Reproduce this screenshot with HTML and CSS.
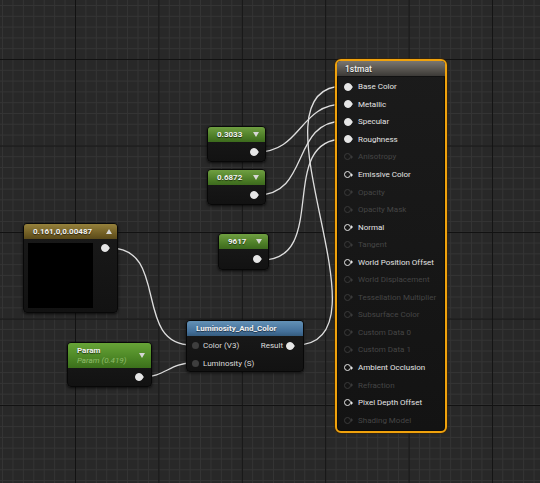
FILE: index.html
```html
<!DOCTYPE html>
<html>
<head>
<meta charset="utf-8">
<link rel="stylesheet" href="styles.css">
</head>
<body>
<div class="graph">
  <svg class="wires" width="540" height="483" viewBox="0 0 540 483">
    <path d="M296,345 C398,345 242,86 344,86"/>
    <path d="M257,152 C302,152 299,104 344,104"/>
    <path d="M257,195 C311,195 290,121 344,121"/>
    <path d="M262,260 C330,260 276,139 344,139"/>
    <path d="M110,248 C170,248 132,345 192,345"/>
    <path d="M143,377 C164,377 171,363 192,363"/>
  </svg>

  <!-- Vector parameter -->
  <div class="node n-vec">
    <div class="head head-gold"><span class="title">0.161,0,0.00487</span><span class="tri up"></span></div>
    <div class="vec-body">
      <div class="preview"></div>
      <span class="pin linked"></span>
    </div>
  </div>

  <!-- Constants -->
  <div class="node const n-c1">
    <div class="head head-green"><span class="title">0.3033</span><span class="tri"></span></div>
    <div class="out-body"><span class="pin linked"></span></div>
  </div>
  <div class="node const n-c2">
    <div class="head head-green"><span class="title">0.6872</span><span class="tri"></span></div>
    <div class="out-body"><span class="pin linked"></span></div>
  </div>
  <div class="node const n-c3">
    <div class="head head-green"><span class="title">9617</span><span class="tri"></span></div>
    <div class="out-body"><span class="pin linked"></span></div>
  </div>

  <!-- Scalar parameter -->
  <div class="node n-param">
    <div class="head head-param">
      <div class="titles">
        <span class="title">Param</span>
        <span class="subtitle">Param (0.419)</span>
      </div>
      <span class="tri"></span>
    </div>
    <div class="out-body"><span class="pin linked"></span></div>
  </div>

  <!-- Function call -->
  <div class="node n-func">
    <div class="head head-blue"><span class="title">Luminosity_And_Color</span></div>
    <div class="func-body">
      <div class="func-row">
        <span class="in"><span class="dot"></span>Color (V3)</span>
        <span class="out">Result<span class="pin linked"></span></span>
      </div>
      <div class="func-row">
        <span class="in"><span class="dot"></span>Luminosity (S)</span>
      </div>
    </div>
  </div>

  <!-- Material result node -->
  <div class="node n-mat">
    <div class="head head-mat"><span class="title mat-title">1stmat</span></div>
    <div class="mat-body">
      <div class="row on"><span class="pin linked"></span>Base Color</div>
      <div class="row on"><span class="pin linked"></span>Metallic</div>
      <div class="row on"><span class="pin linked"></span>Specular</div>
      <div class="row on"><span class="pin linked"></span>Roughness</div>
      <div class="row off"><span class="pin"></span>Anisotropy</div>
      <div class="row on"><span class="pin"></span>Emissive Color</div>
      <div class="row off"><span class="pin"></span>Opacity</div>
      <div class="row off"><span class="pin"></span>Opacity Mask</div>
      <div class="row on"><span class="pin"></span>Normal</div>
      <div class="row off"><span class="pin"></span>Tangent</div>
      <div class="row on"><span class="pin"></span>World Position Offset</div>
      <div class="row off"><span class="pin"></span>World Displacement</div>
      <div class="row off"><span class="pin"></span>Tessellation Multiplier</div>
      <div class="row off"><span class="pin"></span>Subsurface Color</div>
      <div class="row off"><span class="pin"></span>Custom Data 0</div>
      <div class="row off"><span class="pin"></span>Custom Data 1</div>
      <div class="row on"><span class="pin"></span>Ambient Occlusion</div>
      <div class="row off"><span class="pin"></span>Refraction</div>
      <div class="row on"><span class="pin"></span>Pixel Depth Offset</div>
      <div class="row off"><span class="pin"></span>Shading Model</div>
    </div>
  </div>
</div>
</body>
</html>
```

FILE: styles.css
```css
html, body {
  margin: 0;
  padding: 0;
}

body {
  width: 540px;
  height: 483px;
  overflow: hidden;
  font-family: Roboto, "Noto Sans", "Liberation Sans", sans-serif;
  font-size: 8px;
  color: #e2e2e2;
  background-color: #282828;
  background-image:
    linear-gradient(to right, #121212 1px, transparent 1px),
    linear-gradient(to bottom, #121212 1px, transparent 1px),
    linear-gradient(to right, #343434 1px, transparent 1px),
    linear-gradient(to bottom, #343434 1px, transparent 1px);
  background-size: 83.4px 100%, 100% 86.5px, 10.425px 100%, 100% 10.81px;
  background-position: 75px 0, 0 59px, 75px 0, 0 59px;
}

.graph {
  position: relative;
  width: 540px;
  height: 483px;
}

.wires {
  position: absolute;
  left: 0;
  top: 0;
}

.wires path {
  fill: none;
  stroke: #dedede;
  stroke-width: 1.3;
}

/* ---------- generic node ---------- */
.node {
  position: absolute;
  box-sizing: border-box;
  display: flex;
  flex-direction: column;
  border-radius: 4px;
  background: linear-gradient(#1a1a1a, #121212);
  border: 1px solid #080808;
  box-shadow: 0 1px 3px rgba(0, 0, 0, 0.75);
}

.head {
  display: flex;
  align-items: center;
  justify-content: space-between;
  height: 15px;
  padding: 0 6px 0 9px;
  border-radius: 3px 3px 0 0;
  flex: none;
}

.title {
  font-weight: bold;
  color: #f2f2f2;
  white-space: nowrap;
  text-shadow: 0 1px 1px rgba(0, 0, 0, 0.6);
}

.mat-title {
  font-weight: 500;
  font-size: 8.5px;
}

.head-green {
  background: linear-gradient(#6f9f41, #4a7a25 70%, #3c6a1d);
}

.head-gold {
  background: linear-gradient(#95813c, #6d5a22 70%, #5a4a1a);
}

.head-param {
  background: linear-gradient(#67a437, #4c8625 60%, #3b6f1b);
}

.head-blue {
  background: linear-gradient(#6391b6, #44709a 70%, #355c7e);
}

.head-mat {
  background: linear-gradient(#7a7670, #55524d 60%, #3c3a37);
  border-radius: 4px 4px 0 0;
}

/* dropdown triangle */
.tri {
  width: 0;
  height: 0;
  border-left: 3.5px solid transparent;
  border-right: 3.5px solid transparent;
  border-top: 5px solid #d6d6d6;
  flex: none;
}

.tri.up {
  border-top: 0;
  border-bottom: 5px solid #d6d6d6;
}

/* ---------- pins ---------- */
.pin {
  position: relative;
  display: inline-block;
  width: 10px;
  height: 8px;
  flex: none;
  color: #e6e6e6;
}

.pin::before {
  content: "";
  position: absolute;
  left: 0;
  top: 0.5px;
  width: 7px;
  height: 7px;
  box-sizing: border-box;
  border-radius: 50%;
  border: 1.3px solid currentColor;
}

.pin.linked::before {
  background: currentColor;
  left: -0.5px;
  top: 0;
  width: 8px;
  height: 8px;
}

.pin::after {
  content: "";
  position: absolute;
  left: 7.2px;
  top: 2px;
  width: 0;
  height: 0;
  border-top: 2px solid transparent;
  border-bottom: 2px solid transparent;
  border-left: 2.4px solid currentColor;
}

/* ---------- constant nodes ---------- */
.const {
  width: 59px;
  height: 36px;
}

.n-c1 { left: 207px; top: 126px; }
.n-c2 { left: 207px; top: 169px; }
.n-c3 { left: 218px; top: 233px; width: 51px; height: 37px; }

.n-c1 .head, .n-c2 .head {
  padding-left: 9px;
}

.out-body {
  flex: 1;
  display: flex;
  justify-content: flex-end;
  align-items: flex-end;
  padding: 0 5px 5px 0;
}

.n-c3 .out-body {
  padding-bottom: 6px;
}

/* ---------- vector param ---------- */
.n-vec {
  left: 23px;
  top: 223px;
  width: 95px;
  height: 90px;
}

.n-vec .head {
  padding-left: 9px;
  padding-right: 5px;
}

.vec-body {
  flex: 1;
  display: flex;
  align-items: flex-start;
  justify-content: space-between;
  padding: 4px 6px 4px 4px;
}

.preview {
  width: 65px;
  height: 65px;
  background: #000;
}

.vec-body .pin {
  margin-top: 1px;
}

/* ---------- scalar param ---------- */
.n-param {
  left: 67px;
  top: 342px;
  width: 85px;
  height: 45px;
}

.n-param .head {
  height: 25px;
  align-items: center;
  padding-left: 9px;
  padding-right: 6px;
}

.titles {
  display: flex;
  flex-direction: column;
  line-height: 10px;
  padding-top: 1px;
}

.subtitle {
  font-style: italic;
  color: #a7cf83;
  opacity: 0.75;
}

.n-param .out-body {
  padding-bottom: 5px;
  padding-right: 6px;
}

/* ---------- function call ---------- */
.n-func {
  left: 186px;
  top: 320px;
  width: 118px;
  height: 52px;
}

.func-body {
  display: flex;
  flex-direction: column;
  padding: 1px 7px 0 5px;
}

.func-row {
  display: flex;
  align-items: center;
  justify-content: space-between;
  height: 17.5px;
}

.in {
  display: flex;
  align-items: center;
  gap: 4px;
  color: #dcdcdc;
}

.dot {
  width: 7px;
  height: 7px;
  border-radius: 50%;
  background: #3e3e3e;
  flex: none;
}

.out {
  display: flex;
  align-items: center;
  gap: 3px;
  color: #dcdcdc;
}

/* ---------- material result ---------- */
.n-mat {
  left: 335px;
  top: 59px;
  width: 112px;
  height: 374px;
  border: 2px solid #f0a20c;
  border-radius: 6px;
  background: linear-gradient(#1b1b1b, #131313);
  box-shadow: 0 0 0 1px rgba(60, 35, 0, 0.6), inset 0 0 0 1px #0c0c0c;
}

.n-mat .head {
  height: 16px;
  padding-left: 8px;
  border-bottom: 1px solid #111;
  box-sizing: border-box;
}

.mat-body {
  display: flex;
  flex-direction: column;
  padding: 1px 0 0 7px;
}

.row {
  display: flex;
  align-items: center;
  gap: 4px;
  height: 17.55px;
  white-space: nowrap;
}

.row.on {
  color: #e4e4e4;
}

.row.off {
  color: #454545;
}

.row.off .pin {
  color: #3a3a3a;
}
```
